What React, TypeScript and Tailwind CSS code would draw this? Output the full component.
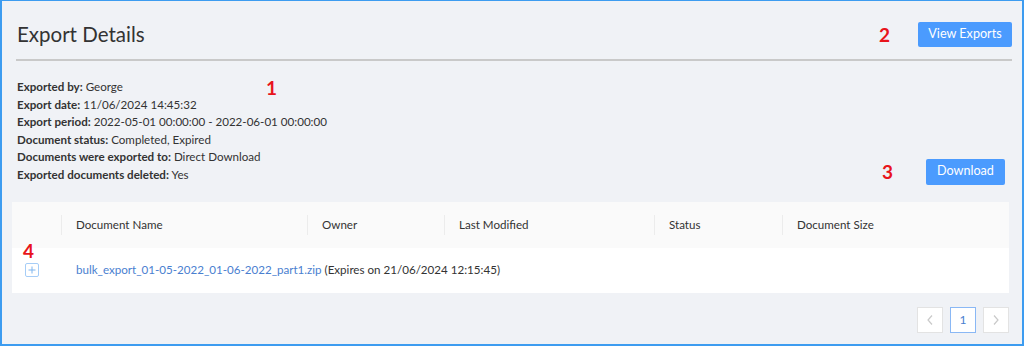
import React from "react";

const info = [
  { label: "Exported by:", value: "George" },
  { label: "Export date:", value: "11/06/2024 14:45:32" },
  { label: "Export period:", value: "2022-05-01 00:00:00 - 2022-06-01 00:00:00" },
  { label: "Document status:", value: "Completed, Expired" },
  { label: "Documents were exported to:", value: "Direct Download" },
  { label: "Exported documents deleted:", value: "Yes" },
];

const columns = [
  { label: "Document Name", width: "w-[246px]" },
  { label: "Owner", width: "w-[137px]" },
  { label: "Last Modified", width: "w-[210px]" },
  { label: "Status", width: "w-[128px]" },
  { label: "Document Size", width: "flex-1" },
];

function Marker({ n, className = "" }: { n: string; className?: string }) {
  return <span className={`text-[19px] font-bold leading-none text-[#e8141b] ${className}`}>{n}</span>;
}

function Chevron({ dir }: { dir: "left" | "right" }) {
  return (
    <svg width="8" height="12" viewBox="0 0 8 12">
      <path
        d={dir === "left" ? "M6 1.5L2 6l4 4.5" : "M2 1.5L6 6l-4 4.5"}
        fill="none"
        stroke="#c9c9c9"
        strokeWidth="1.2"
      />
    </svg>
  );
}

export default function App() {
  return (
    <div
      className="relative w-[1024px] h-[346px] bg-[#f0f2f6] border-l-2 border-r-2 border-t border-b-2 border-[#3d9cf0] overflow-hidden text-[#333]"
      style={{ fontFamily: "Lato, 'Open Sans', sans-serif" }}
    >
      <Marker n="1" className="absolute left-[264px] top-[77px]" />
      <div className="flex flex-col pl-[14px] pr-[10px]">
        {/* header */}
        <div className="flex items-center h-[60px] pt-[9px] border-b-2 border-[#c9c9c9]">
          <h1 className="text-[20.5px] text-[#333] leading-none ml-px">Export Details</h1>
          <div className="flex-1" />
          <Marker n="2" className="mr-[28px]" />
          <button className="h-[25px] w-[94px] rounded-[2px] bg-[#4b9bfe] text-white text-[12.6px]">
            View Exports
          </button>
        </div>

        {/* info */}
        <div className="flex mt-[17px] ml-px mr-[7px]">
          <div className="flex flex-col text-[11.6px] leading-[17.6px]">
            {info.map((row) => (
              <div key={row.label}>
                <span className="font-bold">{row.label}</span> {row.value}
              </div>
            ))}
          </div>
          <div className="flex-1" />
          <div className="flex items-center self-end mb-[-1px]">
            <Marker n="3" className="mr-[33px]" />
            <button className="h-[26px] w-[79px] rounded-[2px] bg-[#4b9bfe] text-white text-[12.6px]">
              Download
            </button>
          </div>
        </div>

        {/* table */}
        <div className="mt-[18px] ml-[-4px] mr-[3px] flex flex-col">
          <div className="flex items-center h-[46px] bg-[#fafafa] text-[11.6px]">
            <div className="w-[50px] h-[20px] border-r border-[#ececec]" />
            {columns.map((c, i) => (
              <div
                key={c.label}
                className={`${c.width} h-[20px] flex items-center pl-[14px] ${i < columns.length - 1 ? "border-r border-[#ececec]" : ""}`}
              >
                {c.label}
              </div>
            ))}
          </div>
          <div className="relative flex items-center h-[45px] bg-white text-[11.6px]">
            <Marker n="4" className="absolute left-[11px] top-[-7px]" />
            <div className="w-[50px] flex items-center pl-[13px]">
              <svg width="14" height="14" viewBox="0 0 14 14">
                <rect x="0.5" y="0.5" width="13" height="13" rx="1.5" fill="white" stroke="#a6cdf7" />
                <path d="M7 3.5v7M3.5 7h7" stroke="#7fb5ee" strokeWidth="1" />
              </svg>
            </div>
            <div className="pl-[14px]">
              <a className="text-[#4a80d0]">bulk_export_01-05-2022_01-06-2022_part1.zip</a>{" "}
              <span>(Expires on 21/06/2024 12:15:45)</span>
            </div>
          </div>
        </div>

        {/* pagination */}
        <div className="flex justify-end gap-[7px] mt-[14px] mr-[3px]">
          <div className="w-[26px] h-[26px] bg-white border border-[#e3e3e3] flex items-center justify-center">
            <Chevron dir="left" />
          </div>
          <div className="w-[26px] h-[26px] bg-white border border-[#8ab8f5] flex items-center justify-center text-[#4a80d0] text-[12px]">
            1
          </div>
          <div className="w-[26px] h-[26px] bg-white border border-[#e3e3e3] flex items-center justify-center">
            <Chevron dir="right" />
          </div>
        </div>
      </div>
    </div>
  );
}
